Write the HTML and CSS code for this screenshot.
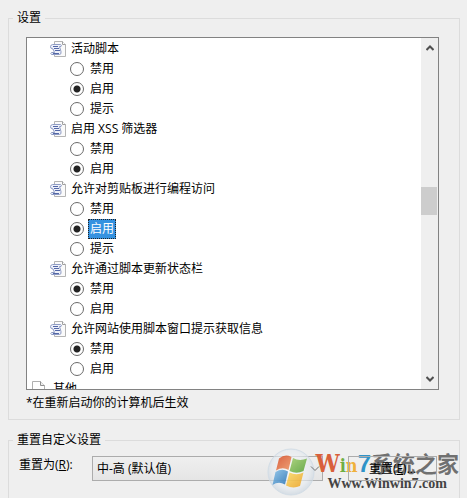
FILE: index.html
```
<!DOCTYPE html>
<html lang="zh-CN">
<head>
    <meta charset="UTF-8">
    <meta name="viewport" content="width=device-width, initial-scale=1.0">
    <title>安全设置</title>
    <link rel="stylesheet" href="styles.css">
</head>
<body>
    <svg class="symbols" aria-hidden="true">
        <symbol id="script-icon" viewBox="0 0 16 16">
            <path d="M4.500 .5h8l3 3v12h-11z" fill="#fafafa" stroke="#b4b4b4"/>
            <path d="M12.500 .5v3h3" fill="#fff" stroke="#a0a0a0"/>
            <path d="M2.500 3.500h8q1.500 .5 .5 2H9.500l1.500 5q.5 3-1.500 3H1.500q-1.500-1 0-2h3L3 8Q0 7.500 .5 5.500q.5-2 2-2z" fill="#edf0f9" stroke="#8f9cc4"/>
            <path d="M3 5.500h5M4 7.500h5M5 9.500h5M3 12.500h6" stroke="#5468a8" fill="none"/>
        </symbol>
        <symbol id="page-icon" viewBox="0 0 16 16">
            <path d="M.5 .5h8l4 4v11h-12z" fill="#fff" stroke="#b0b0b0"/>
            <path d="M8.500 .5v4h4" fill="#eee" stroke="#909090"/>
        </symbol>
    </svg>

    <form class="dialog">
        <fieldset class="group">
            <legend>设置</legend>
            <div class="panel">
                <div class="listbox">
                    <div class="tree">
                        <div class="node"><svg class="icon"><use href="#script-icon"/></svg>活动脚本</div>
                        <label class="option"><input type="radio" name="scripting"><span>禁用</span></label>
                        <label class="option"><input type="radio" name="scripting" checked><span>启用</span></label>
                        <label class="option"><input type="radio" name="scripting"><span>提示</span></label>

                        <div class="node"><svg class="icon"><use href="#script-icon"/></svg>启用 XSS 筛选器</div>
                        <label class="option"><input type="radio" name="xss"><span>禁用</span></label>
                        <label class="option"><input type="radio" name="xss" checked><span>启用</span></label>

                        <div class="node"><svg class="icon"><use href="#script-icon"/></svg>允许对剪贴板进行编程访问</div>
                        <label class="option"><input type="radio" name="clipboard"><span>禁用</span></label>
                        <label class="option"><input type="radio" name="clipboard" checked><span class="selected">启用</span></label>
                        <label class="option"><input type="radio" name="clipboard"><span>提示</span></label>

                        <div class="node"><svg class="icon"><use href="#script-icon"/></svg>允许通过脚本更新状态栏</div>
                        <label class="option"><input type="radio" name="status" checked><span>禁用</span></label>
                        <label class="option"><input type="radio" name="status"><span>启用</span></label>

                        <div class="node"><svg class="icon"><use href="#script-icon"/></svg>允许网站使用脚本窗口提示获取信息</div>
                        <label class="option"><input type="radio" name="prompt" checked><span>禁用</span></label>
                        <label class="option"><input type="radio" name="prompt"><span>启用</span></label>

                        <div class="node root"><svg class="icon"><use href="#page-icon"/></svg>其他</div>
                    </div>
                    <div class="scrollbar">
                        <button type="button" aria-label="向上滚动"><svg width="8" height="6" viewBox="0 0 8 6"><path d="M.5 5L4 1.500 7.500 5"/></svg></button>
                        <div class="track"><div class="thumb"></div></div>
                        <button type="button" aria-label="向下滚动"><svg width="8" height="6" viewBox="0 0 8 6"><path d="M.5 1L4 4.500 7.500 1"/></svg></button>
                    </div>
                </div>
                <p class="hint">*在重新启动你的计算机后生效</p>
            </div>
        </fieldset>

        <fieldset class="group reset">
            <legend>重置自定义设置</legend>
            <div class="reset-row">
                <label for="level">重置为(<u>R</u>):</label>
                <div class="select">
                    <select id="level">
                        <option>中-高 (默认值)</option>
                    </select>
                    <svg class="arrow" width="10" height="6" viewBox="0 0 10 6"><path d="M1 .5L5 4.500 9 .5"/></svg>
                </div>
                <button type="button" class="reset-button">重置(<u>E</u>)...</button>
            </div>

            <div class="watermark">
                <svg class="orb" viewBox="0 0 48 48">
                    <defs>
                        <radialGradient id="glass" cx="50%" cy="45%" r="55%">
                            <stop offset="0" stop-color="#fff" stop-opacity=".9"/>
                            <stop offset=".75" stop-color="#e6ebf0" stop-opacity=".7"/>
                            <stop offset="1" stop-color="#c6d3df" stop-opacity=".7"/>
                        </radialGradient>
                        <linearGradient id="red" x2="1" y2="1"><stop offset="0" stop-color="#d8532f"/><stop offset="1" stop-color="#ef9a6a"/></linearGradient>
                        <linearGradient id="green" x2="1" y2="1"><stop offset="0" stop-color="#a5cf73"/><stop offset="1" stop-color="#5ba43c"/></linearGradient>
                        <linearGradient id="blue" x2="1" y2="1"><stop offset="0" stop-color="#8cc4ea"/><stop offset="1" stop-color="#2f78b8"/></linearGradient>
                        <linearGradient id="yellow" x2="1" y2="1"><stop offset="0" stop-color="#fbdc6c"/><stop offset="1" stop-color="#eda52b"/></linearGradient>
                    </defs>
                    <circle cx="24" cy="24" r="23" fill="url(#glass)" stroke="#d0dce6"/>
                    <path d="M12 10.500q6-5 12.500-1.500l-3 13q-6-3.500-12.500 .5z" fill="url(#red)"/>
                    <path d="M26 10q6.500 3.500 14 .5l-3.500 12.500q-7 3.500-14 0z" fill="url(#green)"/>
                    <path d="M8.500 24q6.500-4 12.500-.5l-3 13q-6.500-3.500-12.500 .5z" fill="url(#blue)"/>
                    <path d="M22.500 24.500q7 3.500 14 0l-3.500 13.500q-7 3-14-.5z" fill="url(#yellow)"/>
                </svg>
                <div class="brand">
                    <div class="brand-name"><b class="w">W</b><b class="i">i</b><b class="n">n</b><b class="seven">7</b><span>系统之家</span></div>
                    <div class="brand-url">Www.Winwin7.com</div>
                </div>
            </div>
        </fieldset>
    </form>
</body>
</html>
```

FILE: styles.css
```
* {
    box-sizing: border-box;
}
body {
    margin: 0;
    background: #efefef;
    color: #000;
    font: 12px/16px "Open Sans", "Noto Sans CJK SC", sans-serif;
}
button, select {
    font: inherit;
    color: inherit;
}
.symbols {
    position: absolute;
    width: 0;
    height: 0;
}
.dialog {
    display: flex;
    flex-direction: column;
    gap: 12px;
    height: 100vh;
    padding: 10px 7px 0 8px;
    overflow: hidden;
}
.group {
    min-width: 0;
    margin: 0;
    padding: 0 4px;
    border: 1px solid #dcdcdc;
}
.group legend {
    padding: 0 4px;
}
.panel {
    padding: 11px 16px 8px 13px;
}

/* settings list */
.listbox {
    display: flex;
    height: 353px;
    border: 1px solid #828282;
    background: #fff;
    overflow: hidden;
}
.tree {
    flex: 1;
    padding: 1px 0 0 23px;
    overflow: hidden;
}
.node, .option {
    display: flex;
    align-items: center;
    height: 20px;
    white-space: nowrap;
}
.node {
    gap: 5px;
}
.root {
    margin-left: -18px;
}
.icon {
    width: 16px;
    height: 16px;
}
.option {
    gap: 4px;
    padding-left: 20px;
}
.option input {
    appearance: none;
    width: 14px;
    height: 14px;
    margin: 0;
    border: 1px solid #6a6a6a;
    border-radius: 50%;
    background: #fff;
}
.option input:checked {
    background: radial-gradient(circle, #222 3px, #fff 4px);
}
.option span {
    padding: 1px;
    border: 1px solid transparent;
}
.option .selected {
    border: 1px dotted #222;
    background: #3592e0;
    color: #fff;
}
.scrollbar {
    display: flex;
    flex-direction: column;
    width: 17px;
    background: #efefef;
}
.scrollbar button {
    display: flex;
    align-items: center;
    justify-content: center;
    height: 20px;
    padding: 0;
    border: 0;
    background: none;
}
.scrollbar path {
    fill: none;
    stroke: #505050;
    stroke-width: 2;
}
.track {
    flex: 1;
    padding-top: 129px;
}
.thumb {
    height: 28px;
    margin-right: 1px;
    background: #cdcdcd;
}
.hint {
    margin: 5px 0 0;
}

/* reset row */
.reset {
    position: relative;
    flex: 1;
    border-bottom: 0;
}
.reset-row {
    display: flex;
    padding: 8px 18px 0 6px;
}
.reset-row label {
    width: 73px;
    padding-top: 1px;
}
.select {
    position: relative;
    flex: 1;
    margin-right: 25px;
}
.select select {
    appearance: none;
    width: 100%;
    height: 25px;
    padding: 0 4px;
    border: 1px solid #acacac;
    border-radius: 0;
    background: linear-gradient(#efefef, #e5e5e5);
}
.arrow {
    position: absolute;
    right: 3px;
    top: 10px;
    z-index: 2;
    fill: none;
    stroke: #707070;
    pointer-events: none;
}
.reset-button {
    position: relative;
    z-index: 2;
    width: 89px;
    height: 25px;
    padding: 0;
    border: 1px solid #acacac;
    background: none;
}

/* site mark over the bottom right corner */
.watermark {
    position: absolute;
    right: 0;
    bottom: 2px;
    z-index: 1;
    display: flex;
    align-items: center;
    pointer-events: none;
}
.orb {
    width: 48px;
    height: 48px;
    opacity: .9;
}
.brand-name {
    display: flex;
    align-items: baseline;
    height: 24px;
    color: #707070;
    font: bold 22px/24px "Noto Sans CJK SC", sans-serif;
}
.brand-name b {
    font: bold 24px/24px "DejaVu Serif Condensed", "DejaVu Serif", serif;
}
.brand-name .w {
    color: #d9603b;
}
.brand-name .i, .brand-name .n {
    font-size: 18px;
}
.brand-name .i {
    color: #6fae45;
}
.brand-name .n {
    color: #efb13c;
}
.brand-name .seven {
    color: #2f93c8;
    font-family: "Liberation Sans", sans-serif;
}
.brand-url {
    padding-left: 12px;
    color: #444;
    font: bold 14px/20px "Liberation Serif", serif;
}
```
